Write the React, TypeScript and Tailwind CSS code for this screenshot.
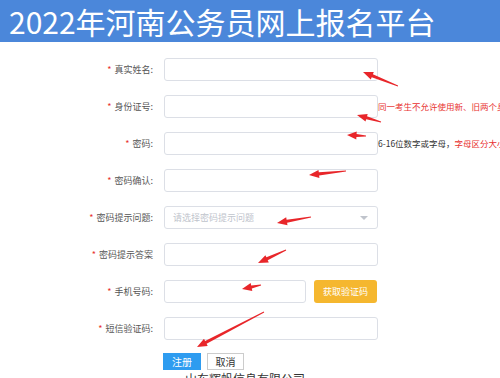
import React from "react";

const FONT = { fontFamily: '"Noto Sans CJK SC", "Noto Sans", sans-serif' };

type Row = { label: string; kind?: "input" | "select" | "phone"; hint?: React.ReactNode };

const ROWS: Row[] = [
	{ label: "真实姓名:" },
	{
		label: "身份证号:",
		hint: <span className="text-[#e8312f]">同一考生不允许使用新、旧两个身份证号报名</span>,
	},
	{
		label: "密码:",
		hint: (
			<>
				<span className="text-[#333]">6-16位数字或字母，</span>
				<span className="text-[#e8312f]">字母区分大小写</span>
			</>
		),
	},
	{ label: "密码确认:" },
	{ label: "密码提示问题:", kind: "select" },
	{ label: "密码提示答案" },
	{ label: "手机号码:", kind: "phone" },
	{ label: "短信验证码:" },
];

// red annotation arrows drawn over the screenshot
const ARROWS: [number, number, number, number][] = [
	[398, 86, 363, 72],
	[381, 122, 357, 115],
	[366, 136, 347, 135],
	[346, 171, 309, 175],
	[311, 217, 277, 223],
	[286, 250, 258, 263],
	[261, 285, 242, 289],
	[264, 312, 197, 347],
];

function arrowPoints(x1: number, y1: number, x2: number, y2: number) {
	const dx = x2 - x1;
	const dy = y2 - y1;
	const len = Math.hypot(dx, dy);
	const ux = dx / len;
	const uy = dy / len;
	const nx = -uy;
	const ny = ux;
	const head = Math.min(10, len * 0.5);
	const bx = x2 - ux * head;
	const by = y2 - uy * head;
	const p = (x: number, y: number) => `${x.toFixed(1)},${y.toFixed(1)}`;
	return [
		p(x1 + nx * 0.4, y1 + ny * 0.4),
		p(bx + nx * 1.6, by + ny * 1.6),
		p(bx + nx * 4, by + ny * 4),
		p(x2, y2),
		p(bx - nx * 4, by - ny * 4),
		p(bx - nx * 1.6, by - ny * 1.6),
		p(x1 - nx * 0.4, y1 - ny * 0.4),
	].join(" ");
}

function Field({ row }: { row: Row }) {
	if (row.kind === "select") {
		return (
			<div className="flex h-[23px] w-[214px] shrink-0 items-center justify-between rounded-[3px] border border-[#dcdfe6] bg-white pl-[8px] pr-[9px]">
				<span className="text-[9px] text-[#c0c4cc]">请选择密码提示问题</span>
				<span className="h-0 w-0 border-x-[4px] border-t-[4px] border-x-transparent border-t-[#c0c4cc]" />
			</div>
		);
	}
	if (row.kind === "phone") {
		return (
			<div className="flex shrink-0 items-center gap-[8px]">
				<div className="h-[23px] w-[142px] rounded-[3px] border border-[#dcdfe6] bg-white" />
				<button className="h-[23px] w-[63px] rounded-[3px] bg-[#f5b72f] text-[9px] text-white">
					获取验证码
				</button>
			</div>
		);
	}
	return <div className="h-[23px] w-[214px] shrink-0 rounded-[3px] border border-[#dcdfe6] bg-white" />;
}

export default function App() {
	return (
		<div className="relative h-[378px] w-[500px] overflow-hidden bg-white" style={FONT}>
			{/* header */}
			<div className="flex h-[42px] items-center bg-[#4b87da] pl-[9px]">
				<h1 className="whitespace-nowrap text-[30px] font-normal leading-none text-white">
					2022年河南公务员网上报名平台
				</h1>
			</div>

			{/* form */}
			<div className="flex flex-col gap-[14px] pt-[16px]">
				{ROWS.map((row, i) => (
					<div key={i} className="flex items-center">
						<div className="w-[164px] shrink-0 pr-[11px] text-right text-[9px] text-[#555]">
							<span className="mr-[3px] text-[#e8312f]">*</span>
							{row.label}
						</div>
						<Field row={row} />
						{row.hint && <span className="whitespace-nowrap text-[8.5px]">{row.hint}</span>}
					</div>
				))}
			</div>

			<div className="mt-[13px] flex gap-[6px] pl-[163px]">
				<button className="h-[17px] w-[38px] bg-[#2e9cf0] text-[10px] text-white">注册</button>
				<button className="h-[17px] w-[37px] border border-[#ccc] bg-white text-[10px] text-[#333]">
					取消
				</button>
			</div>
			<p className="mt-[2px] pl-[185px] text-[12px] leading-[14px] text-[#333]">山东辉帆信息有限公司</p>

			{/* annotation arrows */}
			<svg className="pointer-events-none absolute left-0 top-0" width={500} height={378}>
				{ARROWS.map(([a, b, c, d], i) => (
					<polygon key={i} points={arrowPoints(a, b, c, d)} fill="#e8262a" />
				))}
			</svg>
		</div>
	);
}
